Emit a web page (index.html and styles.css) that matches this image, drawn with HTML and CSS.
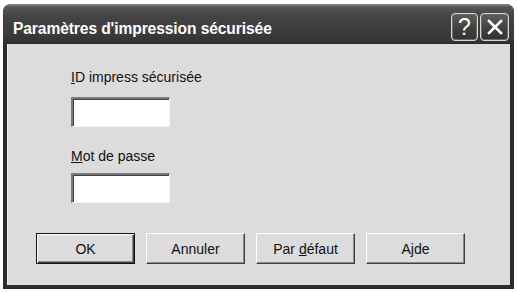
FILE: index.html
```html
<!DOCTYPE html>
<html lang="fr">
<head>
<meta charset="utf-8">
<title>Paramètres d'impression sécurisée</title>
<link rel="stylesheet" href="styles.css">
</head>
<body>
<div class="window">
  <div class="titlebar">
    <span class="title">Paramètres d'impression sécurisée</span>
    <div class="tb-buttons">
      <span class="tb-btn help">?</span>
      <span class="tb-btn close"><svg width="18" height="18" viewBox="0 0 18 18"><path d="M3 3 L15 15 M15 3 L3 15" stroke="#fff" stroke-width="2.6" stroke-linecap="square"/></svg></span>
    </div>
  </div>
  <div class="client">
    <label class="lbl lbl-id"><u>I</u>D impress sécurisée</label>
    <div class="field field-id"></div>
    <label class="lbl lbl-pw"><u>M</u>ot de passe</label>
    <div class="field field-pw"></div>
    <div class="buttons">
      <span class="btn default"><span>OK</span></span>
      <span class="btn"><span>Annuler</span></span>
      <span class="btn"><span>Par <u>d</u>éfaut</span></span>
      <span class="btn"><span>A<u>j</u>de</span></span>
    </div>
  </div>
</div>
</body>
</html>
```

FILE: styles.css
```css
html, body {
  margin: 0;
  padding: 0;
  background: #ffffff;
}

.window {
  margin: 4px 0 0 3px;
  width: 511px;
  height: 285px;
  background: #2c2c2c;
  border-radius: 8px 8px 0 0;
  display: flex;
  flex-direction: column;
  box-sizing: border-box;
}

.titlebar {
  height: 40px;
  flex: none;
  display: flex;
  align-items: center;
  justify-content: space-between;
  padding: 0 5px 0 10px;
  border-radius: 8px 8px 0 0;
  background: linear-gradient(#8a8a8a 0, #555555 3px, #444444 12px, #3b3b3b 30px, #333333 38px, #2a2a2a 40px);
}

.title {
  font-family: "Liberation Sans", Arial, sans-serif;
  font-weight: bold;
  font-size: 15.6px;
  color: #ffffff;
  padding-top: 10px;
  letter-spacing: -0.1px;
}

.tb-buttons {
  display: flex;
  gap: 2px;
  padding-top: 6px;
}

.tb-btn {
  width: 27px;
  height: 28px;
  box-sizing: border-box;
  border: 1px solid #d8d8d8;
  border-radius: 4px;
  background: linear-gradient(#5e5e5e, #3e3e3e 60%, #333333);
  color: #ffffff;
  display: flex;
  align-items: center;
  justify-content: center;
  box-shadow: inset 0 0 0 1px #6a6a6a;
}

.help {
  font-family: "Liberation Sans", Arial, sans-serif;
  font-size: 23px;
  line-height: 1;
}

.close {
  width: 29px;
}

.client {
  flex: 1;
  margin: 0 4px 4px 4px;
  background: #dcdcdc;
  border-left: 1px solid #efefef;
  display: flex;
  flex-direction: column;
  align-items: flex-start;
  padding-left: 63px;
  font-family: "Liberation Sans", Arial, sans-serif;
  font-size: 14px;
  line-height: 16px;
  color: #111111;
}

.lbl-id { margin-top: 25px; }
.lbl-pw { margin-top: 21px; }

.field {
  width: 99px;
  height: 30px;
  box-sizing: border-box;
  background: #ffffff;
  border-top: 2px solid #7a7a7a;
  border-left: 2px solid #7a7a7a;
  border-right: 1px solid #f4f4f4;
  border-bottom: 1px solid #f4f4f4;
  box-shadow: inset 1px 1px 0 #404040;
}

.field-id { margin-top: 12px; }
.field-pw { margin-top: 9px; }

.buttons {
  display: flex;
  gap: 11px;
  margin-top: 30px;
  margin-left: -35px;
}

.btn {
  width: 99px;
  height: 31px;
  box-sizing: border-box;
  display: flex;
  align-items: center;
  justify-content: center;
  background: #dcdcdc;
  border-top: 1px solid #ffffff;
  border-left: 1px solid #ffffff;
  border-right: 1px solid #404040;
  border-bottom: 1px solid #404040;
  box-shadow: inset -1px -1px 0 #8a8a8a;
}

.btn.default {
  border: 1px solid #111111;
  box-shadow: inset 1px 1px 0 #ffffff, inset -1px -1px 0 #404040, inset -2px -2px 0 #8a8a8a;
}
```
